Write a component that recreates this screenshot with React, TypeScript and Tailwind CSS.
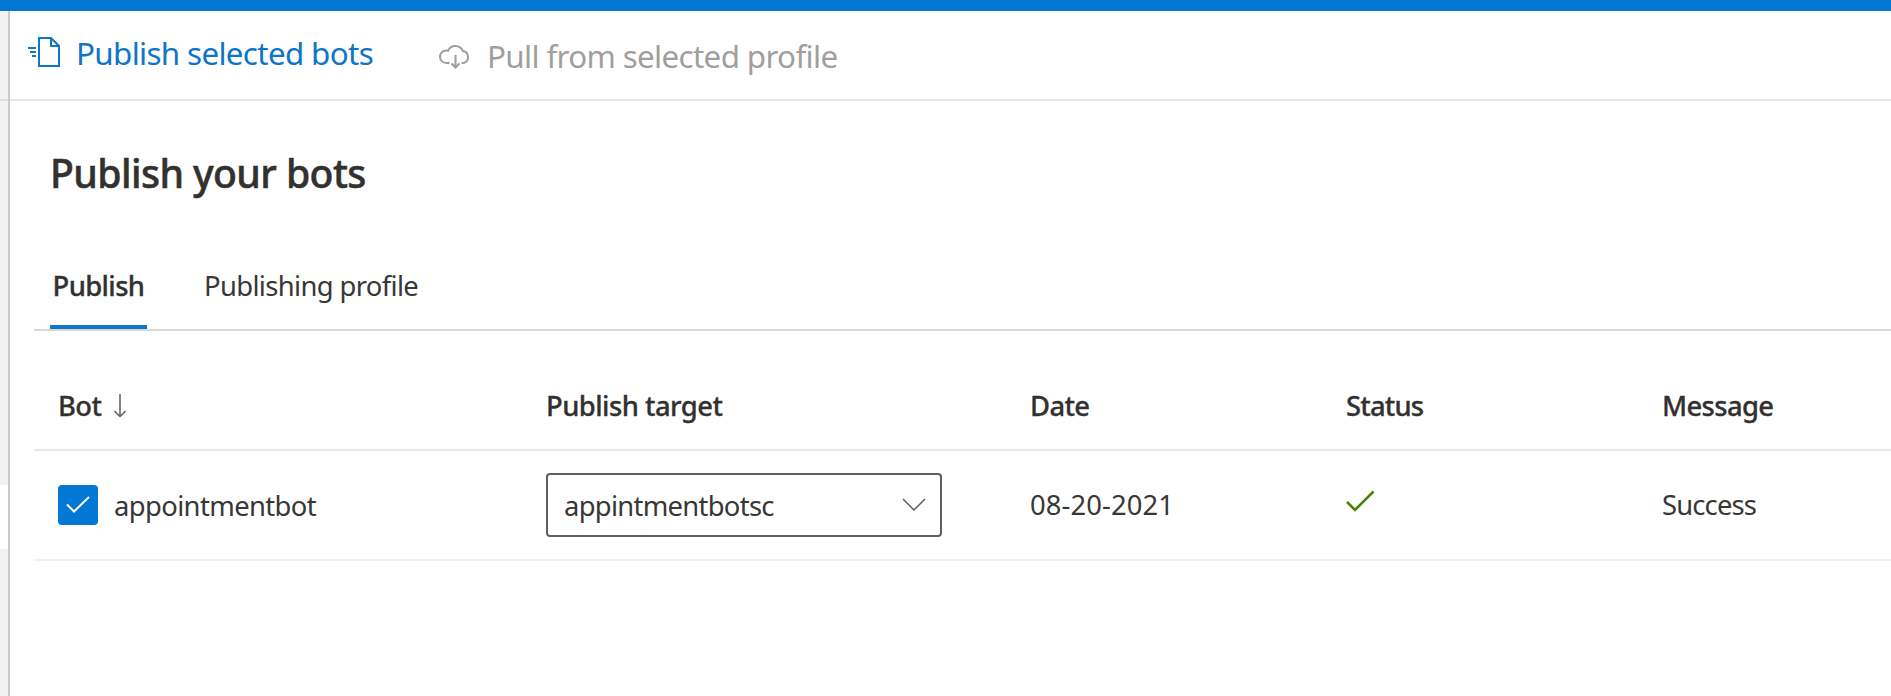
import React from "react";

function SendPageIcon() {
  return (
    <svg width="34" height="34" viewBox="0 0 34 34" fill="none" stroke="currentColor" strokeWidth="2" className="shrink-0">
      <path d="M12 3h12l8 8v20H12z" />
      <path d="M24 3v8h8" />
      <path d="M1 13h8M3 17h6M5 21h4" />
    </svg>
  );
}

function CloudDownloadIcon() {
  return (
    <svg width="34" height="26" viewBox="0 0 34 26" fill="none" stroke="currentColor" strokeWidth="2" className="shrink-0">
      <path d="M11.500 20H8.300a6.300 6.300 0 0 1 0-12.600q.9 0 1.700.3A8.200 8.200 0 0 1 24.900 8A6.200 6.200 0 0 1 25.800 20H23.500" />
      <path d="M17.500 12v12.500M13.500 20.500l4 4 4-4" />
    </svg>
  );
}

const heads = "text-[27.4px] leading-10 font-medium whitespace-nowrap [-webkit-text-stroke:0.3px]";
const cells = "text-[27.4px] leading-10 whitespace-nowrap text-[#383736]";

export default function App() {
  return (
    <div className="flex h-[696px] w-[1891px] flex-col overflow-hidden bg-white font-['Noto_Sans',sans-serif] text-[#323130]">
      <header className="h-[11px] shrink-0 bg-[#0078d4]" />
      <div className="flex min-h-0 flex-1">
        <nav className="flex w-[10px] shrink-0 flex-col border-r-2 border-[#cdcbc9] bg-[#f3f2f1]">
          <div className="h-[90px] shrink-0 border-b-2 border-[#e1dfdd]" />
          <div className="h-[384px] shrink-0" />
          <div className="h-[64px] shrink-0 bg-white" />
        </nav>
        <main className="flex min-w-0 flex-1 flex-col">
          <div className="flex h-[90px] shrink-0 items-start border-b-2 border-[#e8e8e8] pl-[17px]">
            <button className="mt-[19px] flex w-[411px] items-center text-[#0f75c7]">
              <SendPageIcon />
              <span className="mt-[3px] ml-[15px] text-[31.4px] leading-10 tracking-[-0.68px] whitespace-nowrap">Publish selected bots</span>
            </button>
            <button className="mt-[25px] flex items-center text-[#a19f9d]">
              <CloudDownloadIcon />
              <span className="ml-[15px] text-[31.4px] leading-10 tracking-[-0.67px] whitespace-nowrap">Pull from selected profile</span>
            </button>
          </div>
          <h1 className="mt-[48px] pl-10 text-[39.2px] leading-[48px] font-medium tracking-[-0.6px] [-webkit-text-stroke:0.5px]">Publish your bots</h1>
          <div className="ml-6 mt-[48px] flex h-[86px] shrink-0 border-b-2 border-[#d9d9d9] pl-4">
            <div className="flex h-[84px] w-[97px] items-center justify-center border-b-4 border-[#0f75c7] pt-[2px]">
              <span className={`${heads} tracking-[-0.62px]`}>Publish</span>
            </div>
            <div className="ml-[57px] flex h-[80px] items-center pt-[2px]">
              <span className={`${cells} tracking-[-0.64px]`}>Publishing profile</span>
            </div>
          </div>
          <div className="ml-6 grid h-[120px] shrink-0 grid-cols-[488px_484px_316px_1fr] items-center border-b-2 border-[#e8e8e8] pt-8 pl-6">
            <div className="flex items-center">
              <span className={`${heads} tracking-[-0.6px]`}>Bot</span>
              <svg width="14" height="26" viewBox="0 0 14 26" fill="none" stroke="#605e5c" strokeWidth="1.5" className="ml-3">
                <path d="M7 1v22.500M1.500 18L7 23.500l5.500-5.500" />
              </svg>
            </div>
            <span className={`${heads} tracking-[-0.54px]`}>Publish target</span>
            <span className={`${heads} tracking-[-0.63px]`}>Date</span>
            <div className="grid grid-cols-[316px_1fr]">
              <span className={`${heads} tracking-[-0.82px]`}>Status</span>
              <span className={`${heads} tracking-[-0.65px]`}>Message</span>
            </div>
          </div>
          <div className="ml-6 grid h-[110px] shrink-0 grid-cols-[488px_484px_316px_1fr] items-center border-b-2 border-[#f0f0f0] pl-6">
            <div className="flex items-center">
              <span className="flex size-10 items-center justify-center rounded-[4px] bg-[#0078d4]">
                <svg width="24" height="18" viewBox="0 0 24 18" fill="none" stroke="white" strokeWidth="2">
                  <path d="M1 8.500l7 7L23 1" />
                </svg>
              </span>
              <span className={`${cells} ml-4 pt-0.5 tracking-[-0.62px]`}>appointmentbot</span>
            </div>
            <div className="flex h-16 w-[396px] items-center justify-between rounded-[4px] border-2 border-[#605e5c] pr-[14px] pl-4">
              <span className={`${cells} pt-0.5 tracking-[-0.71px]`}>appintmentbotsc</span>
              <svg width="24" height="14" viewBox="0 0 24 14" fill="none" stroke="#605e5c" strokeWidth="1.500">
                <path d="M1 1l11 11L23 1" />
              </svg>
            </div>
            <span className={`${cells} tracking-[0.1px]`}>08-20-2021</span>
            <div className="grid grid-cols-[316px_1fr] items-center">
              <svg width="30" height="22" viewBox="0 0 30 22" fill="none" stroke="#498205" strokeWidth="2.500" className="mb-2">
                <path d="M1 12l8 8L27.500 1.500" />
              </svg>
              <span className={`${cells} tracking-[-0.84px]`}>Success</span>
            </div>
          </div>
        </main>
      </div>
    </div>
  );
}
